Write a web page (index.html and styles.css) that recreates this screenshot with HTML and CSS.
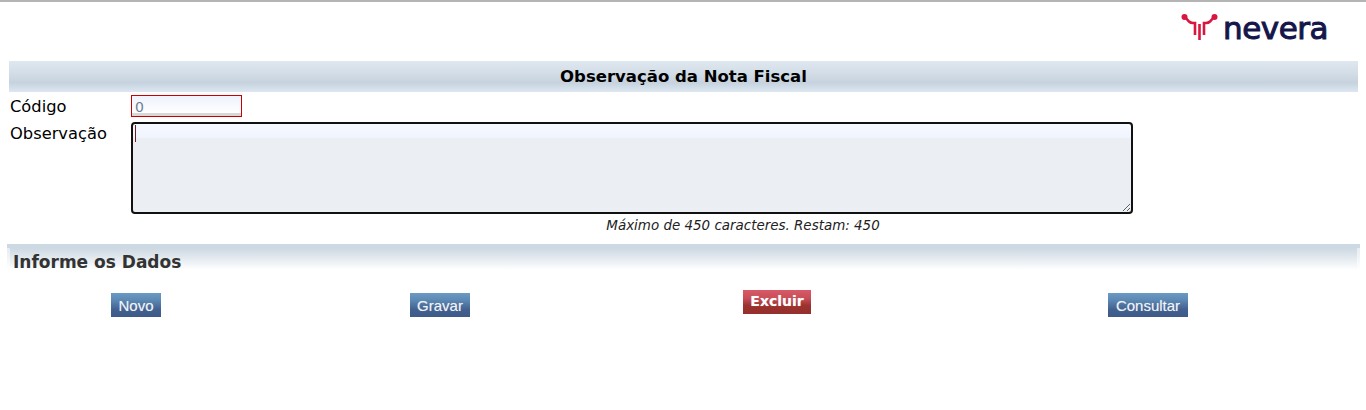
FILE: index.html
```html
<!DOCTYPE html>
<html lang="pt">
  <head>
    <meta charset="utf-8">
    <title>Observação da Nota Fiscal</title>
    <link rel="stylesheet" href="styles.css">
  </head>
  <body>
    <div class="logo-row">
      <div class="logo">
        <svg class="logo-mark" width="37" height="28" viewBox="0 0 37 28">
          <g fill="none" stroke="#d9163f" stroke-width="2.6">
            <path d="M4 4 L8 8.5 Q9.5 10 12 10 L14 10 V22"/>
            <path d="M33 4 L29 8.5 Q27.5 10 25 10 L23 10 V22"/>
            <path d="M18.5 11 V27"/>
          </g>
          <circle cx="3.5" cy="4" r="3" fill="#d9163f"/>
          <circle cx="33.5" cy="4" r="3" fill="#d9163f"/>
        </svg>
        <span class="logo-text">nevera</span>
      </div>
    </div>

    <h1 class="title-bar">Observação da Nota Fiscal</h1>

    <form class="form">
      <div class="field">
        <label for="codigo">Código</label>
        <input id="codigo" class="input-code" type="text" value="0">
      </div>
      <div class="field field-obs">
        <label for="obs">Observação</label>
        <div class="obs-wrap">
          <textarea id="obs" class="input-obs" maxlength="450"></textarea>
          <span class="caret"></span>
        </div>
      </div>
      <p class="hint">Máximo de 450 caracteres. Restam: 450</p>

      <h2 class="section-bar"><span>Informe os Dados</span></h2>

      <div class="actions">
        <div class="action"><button type="button" class="btn">Novo</button></div>
        <div class="action"><button type="button" class="btn">Gravar</button></div>
        <div class="action action-raised"><button type="button" class="btn btn-danger">Excluir</button></div>
        <div class="action"><button type="button" class="btn">Consultar</button></div>
      </div>
    </form>
  </body>
</html>
```

FILE: styles.css
```css
html {
  border-top: 2px solid #b4b4b4;
}

body {
  margin: 0;
  background: #fff;
  color: #000;
  font-family: "DejaVu Sans", Verdana, sans-serif;
}

.logo-row {
  display: flex;
  justify-content: flex-end;
  height: 59px;
  padding-right: 38px;
}

.logo {
  display: flex;
  align-items: flex-start;
  gap: 5px;
  padding-top: 11px;
}

.logo-mark {
  display: block;
}

.logo-text {
  margin-top: -3px;
  font-size: 31px;
  line-height: 36px;
  letter-spacing: -0.5px;
  -webkit-text-stroke: 1px #14164a;
  color: #14164a;
}

.title-bar {
  margin: 0 8px 0 9px;
  height: 31px;
  line-height: 32px;
  font-size: 16.5px;
  text-align: center;
  background: linear-gradient(#dfe8f0, #d3dde7 40%, #c6d2de 70%, #dce7f1);
}

.form {
  margin: 0;
}

.field {
  display: flex;
  align-items: flex-start;
  padding-left: 10px;
}

.field label {
  width: 121px;
  padding-top: 5px;
  font-size: 16.3px;
  line-height: 20px;
}

.field-obs label {
  padding-top: 7px;
}

.input-code {
  box-sizing: border-box;
  width: 111px;
  height: 22px;
  margin: 3px 0 0;
  padding: 1px 3px 0;
  border: 1px solid #c80000;
  outline: none;
  border-radius: 0;
  font-family: inherit;
  font-size: 14px;
  color: #6b7f95;
  background: linear-gradient(#eef2fc, #fff 17px, #d8d8d8 17px);
}

.obs-wrap {
  position: relative;
}

.input-obs {
  display: block;
  box-sizing: border-box;
  width: 1002px;
  height: 92px;
  margin: 5px 0 0;
  padding: 2px 3px;
  border: 2px solid #111;
  border-radius: 4px;
  outline: none;
  font-family: inherit;
  font-size: 14px;
  background: linear-gradient(#f7f9ff, #eff4fe 14px, #ebeef2 14px);
}

.caret {
  position: absolute;
  left: 4px;
  top: 8px;
  width: 1px;
  height: 17px;
  background: #6e1f1f;
}

.hint {
  margin: 3px 0 0;
  font-size: 13.45px;
  line-height: 17px;
  font-style: italic;
  color: #222;
  text-align: center;
  padding-left: 120px;
}

.section-bar {
  margin: 10px 6px 0 7px;
  height: 26px;
  box-sizing: border-box;
  background: linear-gradient(#ccd8e2 4px, #e6ecf1 4px, #fff 100%);
  font-size: 17px;
  line-height: 36px;
  color: #333;
}

.section-bar span {
  display: block;
  height: 100%;
  margin: 0 3px;
  padding-left: 3px;
  background: linear-gradient(#ccd8e2 4px, #fff 100%);
}

.actions {
  display: grid;
  grid-template-columns: 258px 350px 324px 418px;
  margin: 23px 0 0 7px;
}

.action {
  display: flex;
  justify-content: center;
}

.action-raised {
  margin-top: -3px;
}

.btn {
  height: 24px;
  padding: 0 7.5px;
  border: 0;
  font-family: "Liberation Sans", Arial, sans-serif;
  font-size: 15px;
  color: #f0f4f8;
  text-shadow: 0 0 1px rgba(255, 255, 255, 0.4);
  background: linear-gradient(#6b9ac4, #5c88b4 30%, #41608e 70%, #3e5a88);
}

.btn-danger {
  font-weight: bold;
  font-family: "DejaVu Sans", sans-serif;
  font-size: 14px;
  padding: 0 7px 3px;
  color: #fff;
  background: linear-gradient(#d85a66, #c74e58 35%, #9a322e 65%, #96302c);
}
```
